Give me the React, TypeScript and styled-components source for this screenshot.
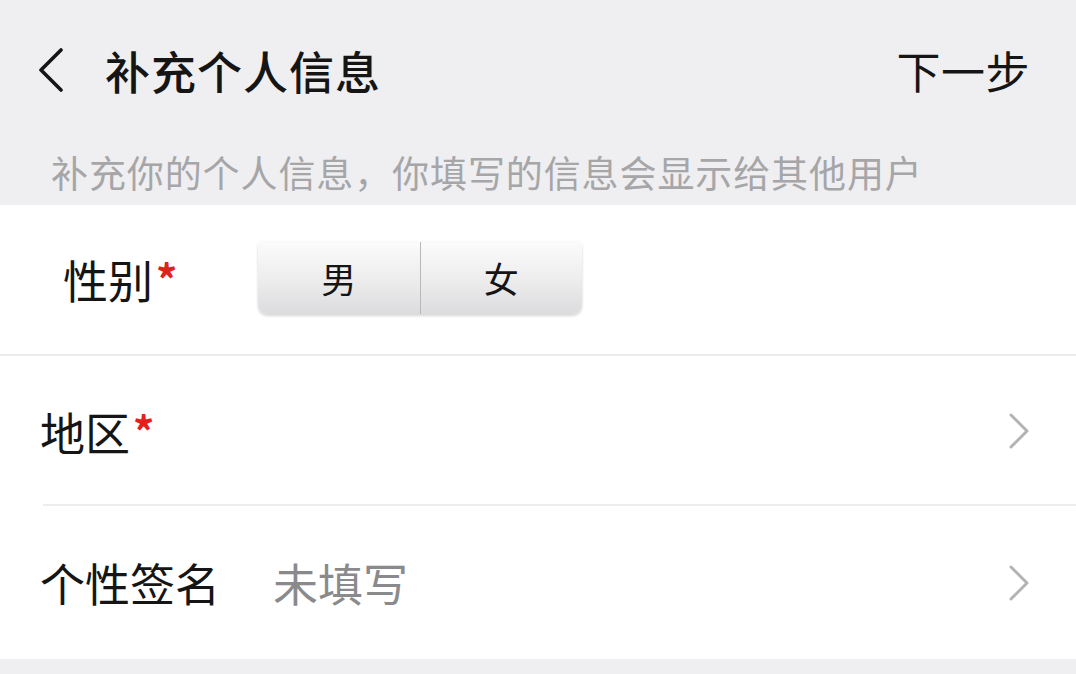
import React from "react";
import styled, { createGlobalStyle } from "styled-components";

const Global = createGlobalStyle`
  html, body { margin: 0; padding: 0; background: #efeff1; }
  body { font-family: "Noto Sans CJK SC", "Noto Sans", sans-serif; -webkit-font-smoothing: antialiased; }
  * { box-sizing: border-box; }
`;

const Page = styled.div`
  width: 1076px;
  height: 674px;
  background: #efeff1;
  display: flex;
  flex-direction: column;
  overflow: hidden;
`;

const Header = styled.header`
  height: 140px;
  display: flex;
  align-items: center;
  padding: 0 46px 0 37px;
`;

const BackButton = styled.button`
  border: 0;
  background: none;
  padding: 0;
  width: 68px;
  height: 48px;
  display: flex;
  align-items: center;
  cursor: pointer;
`;

const Title = styled.h1`
  margin: 0;
  font-size: 45px;
  font-weight: 500;
  color: #151515;
  letter-spacing: 1px;
  flex: 1;
  line-height: 1;
`;

const NextButton = styled.button`
  border: 0;
  background: none;
  padding: 0;
  font-family: inherit;
  font-size: 44px;
  font-weight: 400;
  color: #151515;
  cursor: pointer;
  line-height: 1;
  letter-spacing: 0.5px;
`;

const Hint = styled.p`
  margin: 0;
  height: 65px;
  line-height: 65px;
  padding-left: 51px;
  font-size: 37px;
  letter-spacing: 0.9px;
  color: #a6a6a8;
`;

const Card = styled.section`
  background: #fff;
  display: flex;
  flex-direction: column;
`;

const Row = styled.div<{ $h: number; $pl: number; $divider?: "full" | "inset" }>`
  height: ${(p) => p.$h}px;
  display: flex;
  align-items: center;
  padding: 0 46px 0 ${(p) => p.$pl}px;
  position: relative;
  ${(p) =>
    p.$divider === "full"
      ? "border-bottom: 2px solid #ededf0;"
      : p.$divider === "inset"
      ? `&::after { content: ""; position: absolute; left: 43px; right: 0; bottom: 0; height: 2px; background: #ededf0; }`
      : ""}
`;

const Label = styled.span<{ $w?: number }>`
  font-size: 45px;
  color: #151515;
  line-height: 1;
  display: flex;
  align-items: flex-start;
  width: ${(p) => (p.$w ? `${p.$w}px` : "auto")};
  flex-shrink: 0;
`;

const Required = styled.span`
  color: #e3201b;
  font-size: 42px;
  font-weight: 700;
  line-height: 1;
  margin-left: 3px;
  margin-top: 0px;
`;

const Value = styled.span`
  flex: 1;
  font-size: 45px;
  color: #8a8a8c;
  line-height: 1;
`;

const Spacer = styled.span`
  flex: 1;
`;

const Segmented = styled.div`
  display: flex;
  width: 324px;
  height: 72px;
  margin-top: -3px;
  border-radius: 4px 4px 9px 9px;
  background: linear-gradient(#fbfbfb 0%, #efeff0 45%, #dcdcde 100%);
  box-shadow: 0 2px 3px rgba(0, 0, 0, 0.16), 0 -1px 2px rgba(0, 0, 0, 0.03);
  overflow: hidden;
`;

const SegButton = styled.button<{ $first?: boolean }>`
  flex: 1;
  border: 0;
  background: none;
  font-family: inherit;
  font-size: 35px;
  color: #151515;
  cursor: pointer;
  padding: 0 0 2px;
  ${(p) => (p.$first ? "border-right: 1px solid #b8b8bb;" : "")}
`;

const Chevron = () => (
  <svg width="22" height="36" viewBox="0 0 22 36" fill="none">
    <path d="M3 2 L19 18 L3 34" stroke="#b3b3b5" strokeWidth="3" strokeLinecap="round" strokeLinejoin="round" />
  </svg>
);

const BackIcon = () => (
  <svg width="28" height="44" viewBox="0 0 28 44" fill="none">
    <path d="M24 2 L4 22 L24 42" stroke="#151515" strokeWidth="3.6" strokeLinecap="round" strokeLinejoin="round" />
  </svg>
);

const BottomGap = styled.div`
  flex: 1;
  background: #efeff1;
`;

export default function App() {
  return (
    <>
      <Global />
      <Page>
        <Header>
          <BackButton aria-label="返回">
            <BackIcon />
          </BackButton>
          <Title>补充个人信息</Title>
          <NextButton>下一步</NextButton>
        </Header>
        <Hint>补充你的个人信息，你填写的信息会显示给其他用户</Hint>
        <Card>
          <Row $h={151} $pl={63} $divider="full">
            <Label $w={195}>
              性别<Required>*</Required>
            </Label>
            <Segmented>
              <SegButton $first>男</SegButton>
              <SegButton>女</SegButton>
            </Segmented>
          </Row>
          <Row $h={150} $pl={40} $divider="inset">
            <Label>
              地区<Required>*</Required>
            </Label>
            <Spacer />
            <Chevron />
          </Row>
          <Row $h={153} $pl={40}>
            <Label $w={233}>个性签名</Label>
            <Value>未填写</Value>
            <Chevron />
          </Row>
        </Card>
        <BottomGap />
      </Page>
    </>
  );
}
